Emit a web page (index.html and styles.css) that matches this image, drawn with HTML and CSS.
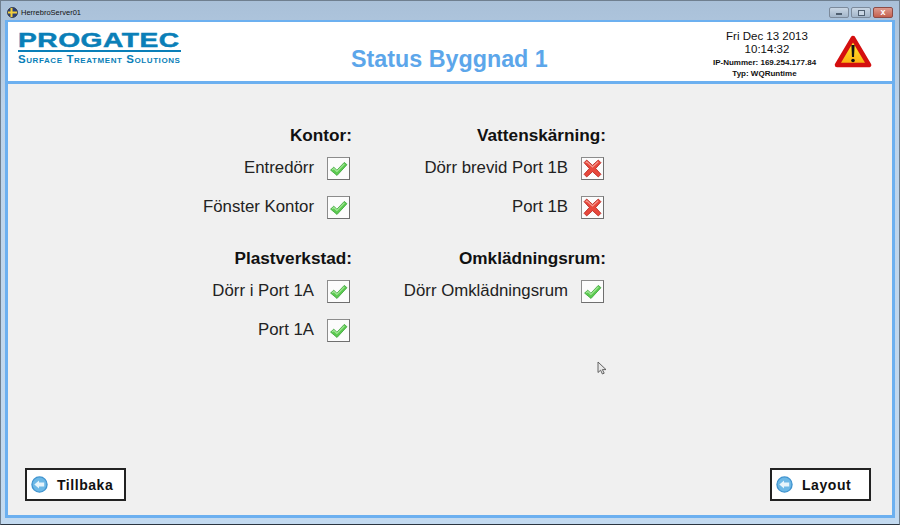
FILE: index.html
```html
<!DOCTYPE html>
<html lang="en">
<head>
  <meta charset="UTF-8" />
  <title>HerrebroServer01</title>
  <link rel="stylesheet" href="styles.css">
</head>
<body>
  <svg class="defs" width="0" height="0">
    <symbol id="ok" viewBox="0 0 18 18">
      <path d="M1.5 10.5 L4.5 7.8 L7.5 10.6 L14.5 3.2 L17 5.4 L7.6 15.6 Z" fill="#5ccb50" stroke="#3fa53c" stroke-width="0.8" stroke-linejoin="round"/>
      <path d="M3 10.4 L4.6 9 L7.5 11.8 L14.6 4.6" fill="none" stroke="#a5e89a" stroke-width="1"/>
    </symbol>
    <symbol id="bad" viewBox="0 0 18 18">
      <path d="M1 3.5 L3.5 1 L9 6 L14.5 1 L17 3.5 L12 9 L17 14.5 L14.5 17 L9 12 L3.5 17 L1 14.5 L6 9 Z" fill="#e8483c" stroke="#b92a22" stroke-width="0.8" stroke-linejoin="round"/>
      <path d="M2.6 3.6 L3.6 2.6 L9 7.5 L14.4 2.6" fill="none" stroke="#f59a90" stroke-width="1"/>
    </symbol>
    <symbol id="back" viewBox="0 0 18 18">
      <circle cx="9" cy="9" r="8" fill="#6cb8e6" stroke="#3f93cf" stroke-width="1.4"/>
      <path d="M3.5 9 L8.5 4.8 V7 H14 V11 H8.5 V13.2 Z" fill="#e6f4fb"/>
    </symbol>
    <linearGradient id="warn-fill" x1="0" y1="0" x2="0" y2="1">
      <stop offset="0.3" stop-color="#ffe02a"/>
      <stop offset="1" stop-color="#fba90f"/>
    </linearGradient>
  </svg>

  <div class="window">
    <div class="titlebar">
      <svg class="app-icon" width="11" height="11" viewBox="0 0 11 11">
        <circle cx="5.5" cy="5.5" r="5" fill="#2a3f7a" stroke="#333" stroke-width="0.8"/>
        <path d="M3.5 1 H5.5 V10 H3.5 Z M1 4.5 H10 V6.5 H1 Z" fill="#f3cf3a"/>
      </svg>
      <span class="app-name">HerrebroServer01</span>
      <div class="win-buttons">
        <span class="win-btn"><i class="min"></i></span>
        <span class="win-btn"><i class="max"></i></span>
        <span class="win-btn close"><i class="x">x</i></span>
      </div>
    </div>

    <div class="frame">
      <header class="header">
        <div class="logo">
          <div class="logo-name"><span>PROGATEC</span></div>
          <div class="logo-sub">Surface Treatment Solutions</div>
        </div>
        <h1 class="title">Status Byggnad 1</h1>
        <div class="info">
          <div class="clock">Fri Dec 13 2013<br>10:14:32</div>
          <div class="meta">IP-Nummer: 169.254.177.84<br>Typ: WQRuntime</div>
        </div>
        <svg class="warn" width="38" height="34" viewBox="0 0 38 34">
          <path d="M19 3 L35 30 H3 Z" fill="url(#warn-fill)" stroke="#d40f0f" stroke-width="4.5" stroke-linejoin="round"/>
          <path d="M17.4 10 H20.6 L20 22 H18 Z" fill="#111"/>
          <circle cx="19" cy="25.5" r="1.8" fill="#111"/>
        </svg>
      </header>

      <main class="content">
        <div class="status-grid">
          <section class="group">
            <h2>Kontor:</h2>
            <div class="row"><span>Entredörr</span><span class="box"><svg><use href="#ok"/></svg></span></div>
            <div class="row"><span>Fönster Kontor</span><span class="box"><svg><use href="#ok"/></svg></span></div>
          </section>
          <section class="group">
            <h2>Vattenskärning:</h2>
            <div class="row"><span>Dörr brevid Port 1B</span><span class="box"><svg><use href="#bad"/></svg></span></div>
            <div class="row"><span>Port 1B</span><span class="box"><svg><use href="#bad"/></svg></span></div>
          </section>
          <section class="group">
            <h2>Plastverkstad:</h2>
            <div class="row"><span>Dörr i Port 1A</span><span class="box"><svg><use href="#ok"/></svg></span></div>
            <div class="row"><span>Port 1A</span><span class="box"><svg><use href="#ok"/></svg></span></div>
          </section>
          <section class="group">
            <h2>Omklädningsrum:</h2>
            <div class="row"><span>Dörr Omklädningsrum</span><span class="box"><svg><use href="#ok"/></svg></span></div>
          </section>
        </div>

        <div class="nav">
          <button class="nav-btn"><svg><use href="#back"/></svg><span>Tillbaka</span></button>
          <button class="nav-btn"><svg><use href="#back"/></svg><span>Layout</span></button>
        </div>

        <svg class="cursor" width="11" height="14" viewBox="0 0 11 14">
          <path d="M1 1 V11.5 L3.6 9.2 L5.4 13 L7.2 12.2 L5.4 8.6 H9 Z" fill="#e8e8e8" stroke="#555" stroke-width="0.9"/>
        </svg>
      </main>
    </div>
  </div>
</body>
</html>
```

FILE: styles.css
```css
html, body {
  margin: 0;
  height: 100%;
}

body {
  font-family: "Liberation Sans", Arial, sans-serif;
  color: #111;
  overflow: hidden;
}

.defs {
  position: absolute;
}

.window {
  width: 900px;
  height: 525px;
  box-sizing: border-box;
  padding: 0 4px 6px;
  display: flex;
  flex-direction: column;
  background: linear-gradient(#a9c0d8, #bcd3ea 20%, #c3daf0);
  border: 1px solid #6f7f8f;
  border-bottom-color: #2c3540;
}

.titlebar {
  height: 19px;
  flex: none;
  display: flex;
  align-items: center;
  gap: 3px;
}

.app-icon {
  margin: 4px 0 0 2px;
}

.app-name {
  font-size: 7.5px;
  color: #111;
  margin-top: 4px;
}

.win-buttons {
  margin-left: auto;
  margin-right: 2px;
  margin-top: 4px;
  display: flex;
  gap: 2px;
}

.win-btn {
  width: 20px;
  height: 11px;
  box-sizing: border-box;
  border: 1px solid #7c8a9b;
  border-radius: 2px;
  background: linear-gradient(#c9d6e4, #a3b6ca);
  display: flex;
  align-items: center;
  justify-content: center;
}

.win-btn.close {
  background: linear-gradient(#dd9a8e, #c4604f);
  border-color: #8d4b45;
}

.win-btn .min {
  width: 6px;
  height: 2px;
  margin-top: 3px;
  background: #fff;
  border: 1px solid #4f5f70;
  box-sizing: border-box;
}

.win-btn .max {
  width: 7px;
  height: 6px;
  border: 1px solid #4f5f70;
  box-sizing: border-box;
  background: #c9d6e4;
}

.win-btn .x {
  font: bold 9px/9px "Liberation Sans", sans-serif;
  color: #fff;
}

.frame {
  flex: 1;
  min-height: 0;
  display: flex;
  flex-direction: column;
  border: 3px solid #6cb0f0;
  border-top-width: 2px;
}

.header {
  height: 59px;
  flex: none;
  display: flex;
  align-items: flex-start;
  position: relative;
  background: #fff;
  border-bottom: 3px solid #6cb0f0;
}

.logo {
  width: 163px;
  margin: 10px 0 0 10px;
  color: #0a7fb8;
}

.logo-name {
  height: 17px;
  padding-bottom: 1px;
  border-bottom: 2px solid #0a7fb8;
}

.logo-name span {
  display: block;
  font-size: 21px;
  line-height: 18px;
  font-weight: bold;
  white-space: nowrap;
  transform-origin: 0 0;
  transform: scale(1.34, 0.95);
  letter-spacing: 0.4px;
  -webkit-text-stroke: 0.5px #0a7fb8;
}

.logo-sub {
  margin-top: 1px;
  font-size: 11.5px;
  line-height: 12px;
  font-weight: bold;
  font-variant: small-caps;
  letter-spacing: 0.58px;
  white-space: nowrap;
}

.title {
  margin: 23px 0 0 170px;
  font-size: 23.3px;
  line-height: 28px;
  font-weight: bold;
  color: #5ca6ea;
  white-space: nowrap;
}

.info {
  margin: 8px 60px 0 auto;
  width: 130px;
  text-align: center;
}

.clock {
  font-size: 11.5px;
  line-height: 12.5px;
}

.meta {
  margin-top: 2px;
  padding-right: 5px;
  font-size: 8px;
  line-height: 11px;
  font-weight: bold;
  white-space: nowrap;
}

.warn {
  position: absolute;
  right: 20px;
  top: 13px;
}

.content {
  flex: 1;
  min-height: 0;
  position: relative;
  display: flex;
  flex-direction: column;
  background: #f0f0f0;
}

.status-grid {
  display: grid;
  grid-template-columns: 152px 254px;
  justify-content: start;
  margin: 40px 0 0 190px;
  row-gap: 28px;
}

.group {
  display: flex;
  flex-direction: column;
  align-items: flex-end;
  gap: 16px;
}

.group h2 {
  margin: 0 -2px 0 0;
  font-size: 17.2px;
  line-height: 22px;
  font-weight: bold;
  white-space: nowrap;
}

.row {
  display: flex;
  align-items: center;
  gap: 13px;
  font-size: 16.8px;
  color: #222;
  white-space: nowrap;
}

.row span:first-child {
  margin-bottom: 2px;
}

.group h2 + .row {
  margin-top: -5px;
}

.box {
  width: 23px;
  height: 23px;
  box-sizing: border-box;
  display: flex;
  align-items: center;
  justify-content: center;
  background: #fcfcfc;
  border: 1px solid #8c8c8c;
  border-right-color: #6f6f6f;
  border-bottom-color: #6f6f6f;
}

.box svg {
  width: 19px;
  height: 19px;
}

.nav {
  margin-top: auto;
  padding: 0 21px 14px 17px;
  display: flex;
  justify-content: space-between;
}

.nav-btn {
  width: 101px;
  height: 33px;
  padding: 0 0 0 4px;
  display: flex;
  align-items: center;
  background: #fff;
  border: 2px solid #222;
  border-radius: 0;
  font: bold 14px "Liberation Sans", Arial, sans-serif;
  letter-spacing: 0.55px;
  color: #111;
}

.nav-btn svg {
  width: 17px;
  height: 17px;
  flex: none;
}

.nav-btn span {
  margin-left: 9px;
}

.cursor {
  position: absolute;
  left: 589px;
  top: 277px;
}
```
